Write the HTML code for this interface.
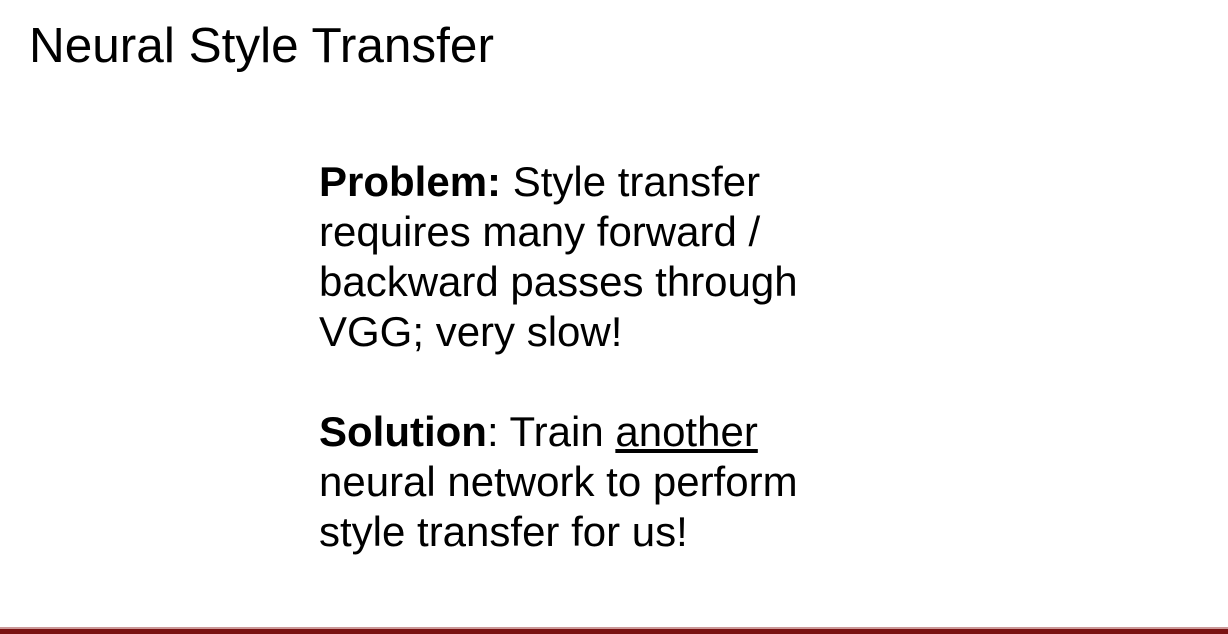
<!DOCTYPE html>
<html><head><style>
html,body{margin:0;padding:0;background:#fff;}
body{width:1228px;height:634px;position:relative;overflow:hidden;font-family:"Liberation Sans",Arial,sans-serif;color:#000;}
.title{position:absolute;left:29px;top:21px;font-size:49.5px;line-height:50px;white-space:nowrap;}
.body{position:absolute;left:319px;top:157px;font-size:42px;line-height:50px;white-space:nowrap;}
.bar{position:absolute;left:0;top:629px;width:1228px;height:5px;background:#7a1212;}
.bar2{position:absolute;left:0;top:627px;width:1228px;height:2px;background:#c99;}
</style></head><body>
<div class="title">Neural Style Transfer</div>
<div class="body"><b>Problem:</b> Style transfer<br>requires many forward /<br>backward passes through<br>VGG; very slow!<br><br><b>Solution</b>: Train <u>another</u><br>neural network to perform<br>style transfer for us!</div>
<div class="bar2"></div><div class="bar"></div>
</body></html>
